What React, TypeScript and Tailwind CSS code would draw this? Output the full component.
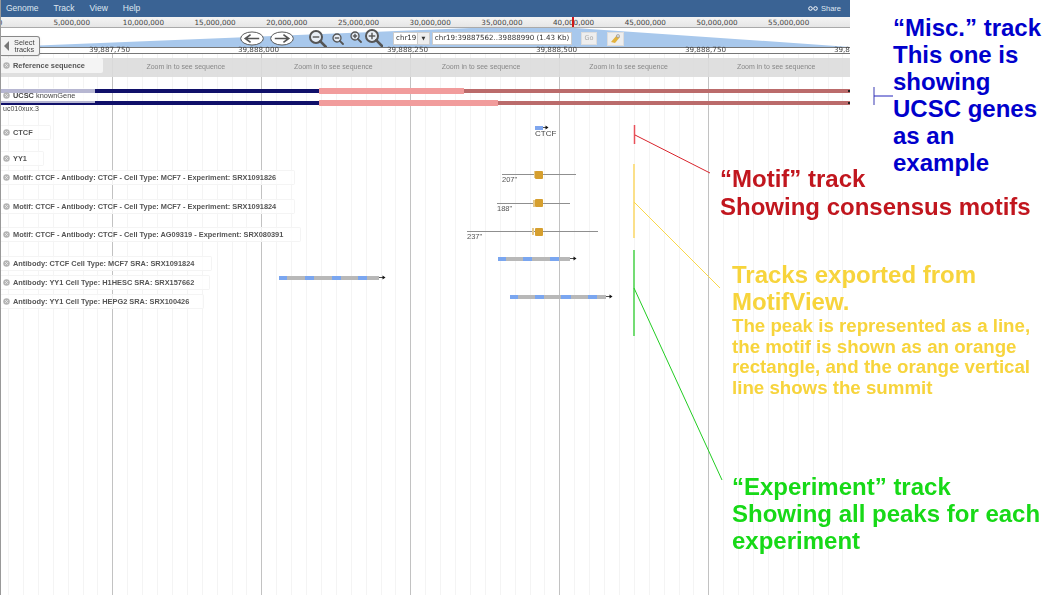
import React from "react";

const sans = "font-['Liberation_Sans',Arial,sans-serif]";
const deja = "font-['DejaVu_Sans',sans-serif]";

const overview = ["0","5,000,000","10,000,000","15,000,000","20,000,000","25,000,000","30,000,000","35,000,000","40,000,000","45,000,000","50,000,000","55,000,000"];
const majors = ["39,887,750","39,888,000","39,888,250","39,888,500","39,888,750","39,889,000"];

function Close() {
  return (
    <svg width="7" height="7" viewBox="0 0 8 8" className="shrink-0">
      <circle cx="4" cy="4" r="3.7" fill="#b4b4b4" />
      <path d="M2.4 2.4 5.6 5.6M5.6 2.4 2.4 5.6" stroke="#efefef" strokeWidth="0.9" />
    </svg>
  );
}

function Label({ text, w, className = "bg-white/75" }: { text: string; w: string; className?: string }) {
  return (
    <div className={`relative z-10 flex h-[15px] items-center gap-[3px] pl-[2px] rounded-r-[2px] border border-l-0 border-[#f4f4f4] text-[7.4px] font-bold text-[#555] whitespace-nowrap ${w} ${className}`}>
      <Close />
      <span>{text}</span>
    </div>
  );
}

function Peak({ left, width, blues, top }: { left: number; width: number; blues: number[][]; top: number }) {
  return (
    <div className="absolute h-[4px] bg-[#b8b8b8]" style={{ left, width, top }}>
      {blues.map(([a, w]) => (
        <div key={a} className="absolute inset-y-0 bg-[#7aa6f0]" style={{ left: a - left, width: w }} />
      ))}
      <svg width="7" height="5" viewBox="0 0 7 5" className="absolute left-full top-[-0.5px]">
        <path d="M0 2.5H4" stroke="#222" strokeWidth="0.8" />
        <path d="M3.5 0.5 6.5 2.5 3.5 4.5Z" fill="#111" />
      </svg>
    </div>
  );
}

function Motif({ left, width, top, tick, text }: { left: number; width: number; top: number; tick: number; text: string }) {
  return (
    <>
      <div className="absolute h-px bg-[#8f8f8f]" style={{ left, width, top: Math.round(top + 4) }} />
      <div className="absolute w-[2px] h-[7px] bg-[#e6c98a]" style={{ left: tick, top: top + 1 }} />
      <div className="absolute left-[533.5px] w-[8px] h-[8px] rounded-[1px] bg-[#d69f2e]" style={{ top: top + 0.5 }} />
      <div className={`absolute text-[7.5px] leading-[8px] text-[#555] ${sans}`} style={{ left, top: top + 6 }}>{text}</div>
    </>
  );
}

function Lens({ r, plus, className }: { r: number; plus: boolean; className: string }) {
  const s = r * 2 + (r > 5 ? 6 : 4);
  const c = r + 1;
  return (
    <svg width={s} height={s} viewBox={`0 0 ${s} ${s}`} className={className}>
      <circle cx={c} cy={c} r={r} fill="#e8eef6" stroke="#555" strokeWidth={r > 5 ? 2 : 1.3} />
      <path d={`M${c + r * 0.7} ${c + r * 0.7} L${s - 1} ${s - 1}`} stroke="#555" strokeWidth={r > 5 ? 2.6 : 1.8} strokeLinecap="round" />
      <path d={`M${c - r * 0.55} ${c}H${c + r * 0.55}`} stroke="#555" strokeWidth="1.4" />
      {plus && <path d={`M${c} ${c - r * 0.55}V${c + r * 0.55}`} stroke="#555" strokeWidth="1.4" />}
    </svg>
  );
}

function Arrow({ right, className = "" }: { right: boolean; className?: string }) {
  return (
    <svg width="24" height="15" viewBox="0 0 25 15" className={className}>
      <ellipse cx="12.5" cy="7.5" rx="11.8" ry="6.8" fill="#fff" stroke="#555" strokeWidth="1" />
      <path d={right ? "M5 7.5H19M14 3.5 19.5 7.5 14 11.5" : "M20 7.5H6M11 3.5 5.5 7.5 11 11.5"} fill="none" stroke="#555" strokeWidth="1.7" />
    </svg>
  );
}

export default function App() {
  return (
    <div className={`relative flex w-[1058px] h-[595px] overflow-hidden bg-white ${sans}`}>
      {/* browser */}
      <div className="relative flex flex-col w-[850px] h-full shrink-0 overflow-hidden border-l border-[#999] blur-[0.35px]">
        {/* menu */}
        <div className="flex items-center justify-between h-[17px] shrink-0 bg-[#3a6394] pl-[5px] pr-[9px] text-[8.5px] text-[#dfe7f0]">
          <div className="flex gap-[15px]">
            <span>Genome</span><span>Track</span><span>View</span><span>Help</span>
          </div>
          <div className="flex items-center gap-[3px] text-[7.5px]">
            <svg width="10" height="5" viewBox="0 0 10 5"><circle cx="2.5" cy="2.5" r="1.8" fill="none" stroke="#fff" /><circle cx="7.5" cy="2.5" r="1.8" fill="none" stroke="#fff" /></svg>
            <span>Share</span>
          </div>
        </div>
        {/* overview */}
        <div className={`relative h-[11px] shrink-0 bg-gradient-to-b from-[#f4f4f4] to-[#e6e6e6] border-b border-[#aaa] text-[7.2px] leading-[11px] text-[#444] ${deja}`}>
          {overview.map((t, i) => (
            <span key={t} className="absolute -translate-x-1/2 whitespace-nowrap" style={{ left: i * 71.7 - 1 }}>{t}</span>
          ))}
          <div className="absolute left-[571px] top-0 w-[2px] h-full bg-[#d01818]" />
        </div>
        {/* navigation */}
        <div className="relative h-[19px] shrink-0">
          <svg className="absolute inset-0" width="850" height="19" viewBox="0 0 850 19">
            <polygon points="0,19 470,0 574,0 850,19" fill="#a8c8ec" />
          </svg>
          <div className="relative flex items-start pl-[239px] h-full">
            <Arrow right={false} className="mt-[3px]" />
            <Arrow right className="ml-[6px] mt-[3px]" />
            <Lens r={6} plus={false} className="ml-[15px] mt-[2px]" />
            <Lens r={4} plus={false} className="ml-[5px] mt-[5px]" />
            <Lens r={4} plus className="ml-[6px] mt-[3px]" />
            <Lens r={6} plus className="ml-[3px] mt-[1px]" />
            <div className={`ml-[10px] mt-[4px] flex h-[13px] items-center text-[7.1px] text-[#333] ${deja}`}>
              <div className="flex h-full items-center w-[37px] bg-white border border-[#ccc]">
                <span className="pl-[2px]">chr19</span>
                <span className="ml-auto flex h-full w-[12px] items-center justify-center bg-[#eee] border-l border-[#ccc] text-[5px]">▼</span>
              </div>
              <div className="ml-[2px] flex h-full items-center justify-center w-[140px] bg-white border border-[#ccc] whitespace-nowrap">chr19:39887562..39888990 (1.43 Kb)</div>
              <div className="ml-[9px] flex h-full w-[16px] items-center justify-center bg-[#eee] border border-[#ddd] text-[#aaa] text-[6.5px]">Go</div>
              <div className="ml-[10px] flex h-[14px] w-[17px] items-center justify-center bg-[#eee] border border-[#ddd]">
                <svg width="11" height="11" viewBox="0 0 11 11"><path d="M1 9 7 2l3 2-5 6Z" fill="#e2b23c" /><circle cx="8" cy="3" r="1.6" fill="#cfd4da" stroke="#888" strokeWidth="0.5" /></svg>
              </div>
            </div>
          </div>
        </div>
        {/* scale */}
        <div className={`relative h-[7px] shrink-0 border-t border-[#777] border-b text-[7.2px] text-[#444] ${deja}`}>
          {majors.map((t, i) => (
            <span key={t} className="absolute top-[-2px] leading-[8px] -translate-x-1/2 whitespace-nowrap" style={{ left: 108.5 + i * 149 }}>{t}</span>
          ))}
        </div>
        {/* select tracks tab */}
        <div className="absolute left-0 top-[36px] z-20 flex h-[20px] w-[39px] items-center gap-[5px] pl-[3px] rounded-r-[3px] border border-l-0 border-[#888] bg-[#f2f2f2] shadow-sm text-[7.4px] leading-[7.5px] text-[#444]">
          <svg width="5" height="10" viewBox="0 0 5 10" className="shrink-0"><path d="M5 0V10L0 5Z" fill="#777" /></svg>
          <span className="text-center">Select<br />tracks</span>
        </div>
        {/* tracks */}
        <div className="relative flex-1">
          {Array.from({ length: 57 }).map((_, i) => (
            <div key={i} className={`absolute top-0 bottom-0 w-px ${i % 10 === 7 ? "bg-[#c2c2c2]" : "bg-[#f4f4f4]"}`} style={{ left: 7 + i * 14.9 }} />
          ))}

          <div className="relative h-[34px] pt-[4px]">
            <div className="absolute left-0 right-0 top-[4px] h-[19px] bg-[#dcdcdc]/90 flex text-[7px] text-[#888]">
              <div className="w-[112px]" />
              {[0, 1, 2, 3, 4].map((i) => (
                <div key={i} className="w-[149px] h-full flex items-center justify-center">Zoom in to see sequence</div>
              ))}
            </div>
            <Label text="Reference sequence" w="w-[102px]" className="bg-[#f4f4f4]" />
          </div>

          <div className="relative h-[37px]">
            <div className="absolute left-0 w-[318px] top-[1px] h-[4px] bg-[#10106a]" />
            <div className="absolute left-[318px] w-[145px] top-0 h-[6px] bg-[#f19c9c]" />
            <div className="absolute left-[463px] right-0 top-[0.5px] h-[4px] bg-[#bb6b6b]" />
            <div className="absolute right-0 w-[2px] top-[1.5px] h-[2px] bg-[#222]" />
            <div className="absolute left-0 w-[318px] top-[13px] h-[4px] bg-[#10106a]" />
            <div className="absolute left-[318px] w-[179px] top-[12px] h-[6px] bg-[#f19c9c]" />
            <div className="absolute left-[497px] right-0 top-[13px] h-[4px] bg-[#bb6b6b]" />
            <div className="absolute right-0 w-[2px] top-[14px] h-[2px] bg-[#222]" />
            <div className="absolute left-0 top-0 z-10 flex h-[15px] w-[94px] items-center gap-[3px] pl-[2px] bg-white/70 text-[7.4px] text-[#444] whitespace-nowrap">
              <Close />
              <span><b className="font-bold">UCSC</b> knownGene</span>
            </div>
            <div className="absolute left-[2px] top-[16.5px] text-[7px] leading-[8px] text-[#444]">uc010xux.3</div>
          </div>

          <div className="relative h-[26px]">
            <Label text="CTCF" w="w-[50px]" />
            <div className="absolute left-[534px] top-[0.5px] w-[8px] h-[4px] bg-[#7fa6ee]" />
            <svg width="6" height="5" viewBox="0 0 6 5" className="absolute left-[542px] top-0"><path d="M0 2.5H3" stroke="#222" strokeWidth="0.8" /><path d="M2.5 .5 5.5 2.5 2.5 4.5Z" fill="#111" /></svg>
            <div className="absolute left-[534px] top-[4px] text-[8px] leading-[9px] text-[#444]">CTCF</div>
          </div>
          <div className="relative h-[19px]"><Label text="YY1" w="w-[43px]" /></div>

          <div className="relative h-[29px]">
            <Label text="Motif: CTCF - Antibody: CTCF - Cell Type: MCF7 - Experiment: SRX1091826" w="w-[294px]" />
            <Motif left={501} width={74} top={0} tick={533} text={'207"'} />
          </div>
          <div className="relative h-[28px]">
            <Label text="Motif: CTCF - Antibody: CTCF - Cell Type: MCF7 - Experiment: SRX1091824" w="w-[294px]" />
            <Motif left={496} width={73} top={-0.5} tick={532} text={'188"'} />
          </div>
          <div className="relative h-[29px]">
            <Label text="Motif: CTCF - Antibody: CTCF - Cell Type: AG09319 - Experiment: SRX080391" w="w-[300px]" />
            <Motif left={466} width={131} top={0} tick={531} text={'237"'} />
          </div>
          <div className="relative h-[19px]">
            <Label text="Antibody: CTCF Cell Type: MCF7 SRA: SRX1091824" w="w-[211px]" />
            <Peak left={497} width={72} top={0.5} blues={[[497, 8], [522, 9], [549, 9]]} />
          </div>
          <div className="relative h-[19px]">
            <Label text="Antibody: YY1 Cell Type: H1HESC SRA: SRX157662" w="w-[209px]" />
            <Peak left={278} width={100} top={0.5} blues={[[278, 8], [304, 9], [331, 9], [357, 9]]} />
          </div>
          <div className="relative h-[19px]">
            <Label text="Antibody: YY1 Cell Type: HEPG2 SRA: SRX100426" w="w-[203px]" />
            <Peak left={509} width={96} top={0.5} blues={[[509, 8], [534, 9], [560, 10], [587, 9]]} />
          </div>
        </div>
      </div>

      {/* blue note, beside the browser */}
      <div className="w-[208px] pl-[43px] pt-[14px] text-[24px] leading-[27px] font-bold text-[#0000cc]">
        “Misc.” track<br />This one is<br />showing<br />UCSC genes<br />as an<br />example
      </div>

      {/* annotation drawing */}
      <svg className="absolute inset-0 pointer-events-none" width="1058" height="595" viewBox="0 0 1058 595">
        <path d="M634.5 125V144" stroke="#e8505a" strokeWidth="1.5" />
        <path d="M635 135 710 173" stroke="#d8222a" strokeWidth="1" />
        <path d="M634 164V238" stroke="#fbe08a" strokeWidth="2" />
        <path d="M634 202 720 288" stroke="#fbd84a" strokeWidth="1" />
        <path d="M634 250V336" stroke="#74dc74" strokeWidth="2" />
        <path d="M634 288 722 480" stroke="#22cc22" strokeWidth="1" />
        <path d="M874 87V105" stroke="#7b7bcc" strokeWidth="1.5" />
        <path d="M874 96H893" stroke="#2222bb" strokeWidth="1" />
      </svg>

      {/* overlaid notes */}
      <div className="absolute left-[720px] top-[165px] text-[24px] leading-[27.5px] font-bold text-[#c1161e] whitespace-nowrap">
        “Motif” track<br />Showing consensus motifs
      </div>
      <div className="absolute left-[732px] top-[262px] font-bold text-[#f7d43c] whitespace-nowrap">
        <div className="text-[24px] leading-[26.5px]">Tracks exported from<br />MotifView.</div>
        <div className="mt-[1px] text-[18.7px] leading-[20.5px]">
          The peak is represented as a line,<br />the motif is shown as an orange<br />rectangle, and the orange vertical<br />line shows the summit
        </div>
      </div>
      <div className="absolute left-[732px] top-[473px] text-[24px] leading-[27px] font-bold text-[#17d917] whitespace-nowrap">
        “Experiment” track<br />Showing all peaks for each<br />experiment
      </div>
    </div>
  );
}
